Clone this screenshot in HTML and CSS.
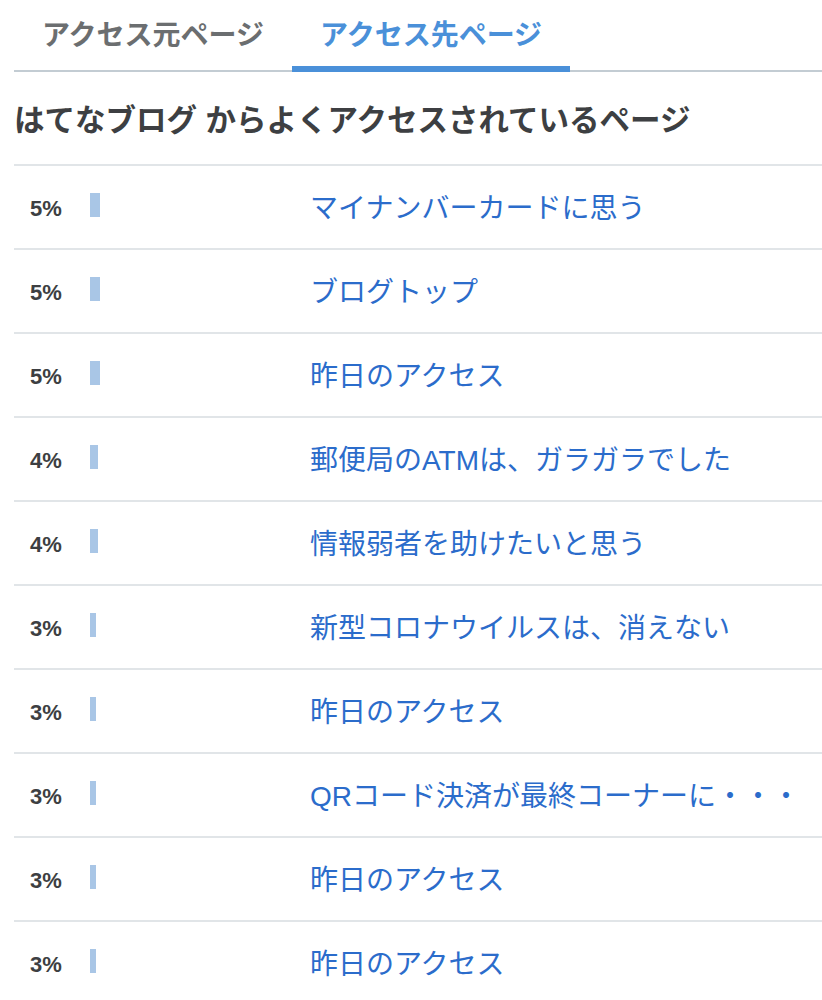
FILE: index.html
```html
<!DOCTYPE html>
<html lang="ja">
<head>
  <meta charset="UTF-8">
  <title>アクセス先ページ</title>
  <link rel="stylesheet" href="styles.css">
</head>
<body>
  <div class="panel">
    <div class="tabs">
      <a class="tab">アクセス元ページ</a>
      <a class="tab active">アクセス先ページ</a>
    </div>

    <h2 class="heading">はてなブログ からよくアクセスされているページ</h2>

    <!-- rows: percent, bar, page title -->
    <div class="rows">
      <div class="row"><span class="pct">5%</span><span class="bar-cell"><span class="bar" style="width:10px"></span></span><a class="title">マイナンバーカードに思う</a></div>
      <div class="row"><span class="pct">5%</span><span class="bar-cell"><span class="bar" style="width:10px"></span></span><a class="title">ブログトップ</a></div>
      <div class="row"><span class="pct">5%</span><span class="bar-cell"><span class="bar" style="width:10px"></span></span><a class="title">昨日のアクセス</a></div>
      <div class="row"><span class="pct">4%</span><span class="bar-cell"><span class="bar" style="width:8px"></span></span><a class="title">郵便局のATMは、ガラガラでした</a></div>
      <div class="row"><span class="pct">4%</span><span class="bar-cell"><span class="bar" style="width:8px"></span></span><a class="title">情報弱者を助けたいと思う</a></div>
      <div class="row"><span class="pct">3%</span><span class="bar-cell"><span class="bar" style="width:6px"></span></span><a class="title">新型コロナウイルスは、消えない</a></div>
      <div class="row"><span class="pct">3%</span><span class="bar-cell"><span class="bar" style="width:6px"></span></span><a class="title">昨日のアクセス</a></div>
      <div class="row"><span class="pct">3%</span><span class="bar-cell"><span class="bar" style="width:6px"></span></span><a class="title">QRコード決済が最終コーナーに・・・</a></div>
      <div class="row"><span class="pct">3%</span><span class="bar-cell"><span class="bar" style="width:6px"></span></span><a class="title">昨日のアクセス</a></div>
      <div class="row"><span class="pct">3%</span><span class="bar-cell"><span class="bar" style="width:6px"></span></span><a class="title">昨日のアクセス</a></div>
    </div>
  </div>
</body>
</html>
```

FILE: styles.css
```css
body {
  margin: 0;
  font-family: "Liberation Sans", "Noto Sans CJK JP", sans-serif;
  background: #fff;
  color: #3d3f42;
}
.panel {
  padding-left: 14px;
}
.tabs {
  display: flex;
  border-bottom: 2px solid #c3ccd3;
  height: 70px;
}
.tab {
  display: flex;
  align-items: center;
  padding: 0 28px;
  font-size: 28px;
  font-weight: bold;
  color: #6b6e70;
  border-bottom: 6px solid transparent;
  margin-bottom: -2px;
}
.tab.active {
  color: #4a90d9;
  border-bottom-color: #4a90d9;
}
.heading {
  margin: 0;
  height: 92px;
  display: flex;
  align-items: center;
  font-size: 30.5px;
  font-weight: bold;
  color: #3d3f42;
  border-bottom: 2px solid #e1e5e8;
}
.row {
  display: flex;
  align-items: center;
  height: 82px;
  border-bottom: 2px solid #e1e5e8;
}
.pct {
  width: 76px;
  padding-left: 16px;
  padding-top: 4px;
  box-sizing: border-box;
  font-size: 22px;
  font-weight: bold;
  color: #3d3f42;
}
.bar-cell {
  width: 220px;
  display: flex;
  margin-top: -4px;
}
.bar {
  display: block;
  height: 24px;
  background: #a9c6e6;
}
.title {
  font-size: 28px;
  color: #2b6ccb;
  margin-top: -3px;
}
```
